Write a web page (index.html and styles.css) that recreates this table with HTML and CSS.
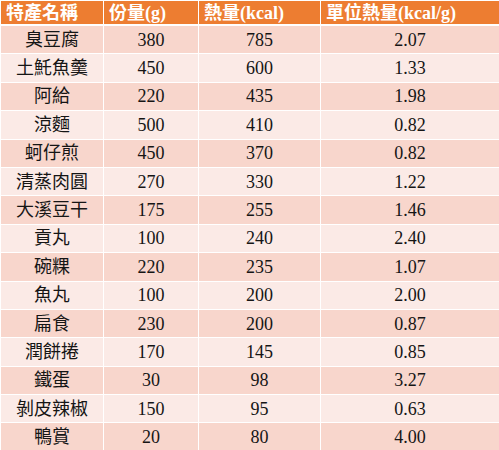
FILE: index.html
```html
<!DOCTYPE html>
<html>
<head>
<meta charset="utf-8">
<link rel="stylesheet" href="styles.css">
</head>
<body>
<table class="tbl">
  <colgroup>
    <col class="c1"><col class="c2"><col class="c3"><col class="c4">
  </colgroup>
  <thead>
    <tr><th>特產名稱</th><th>份量(g)</th><th>熱量(kcal)</th><th>單位熱量(kcal/g)</th></tr>
  </thead>
  <tbody>
    <tr><td>臭豆腐</td><td>380</td><td>785</td><td>2.07</td></tr>
    <tr><td>土魠魚羹</td><td>450</td><td>600</td><td>1.33</td></tr>
    <tr><td>阿給</td><td>220</td><td>435</td><td>1.98</td></tr>
    <tr><td>涼麵</td><td>500</td><td>410</td><td>0.82</td></tr>
    <tr><td>蚵仔煎</td><td>450</td><td>370</td><td>0.82</td></tr>
    <tr><td>清蒸肉圓</td><td>270</td><td>330</td><td>1.22</td></tr>
    <tr><td>大溪豆干</td><td>175</td><td>255</td><td>1.46</td></tr>
    <tr><td>貢丸</td><td>100</td><td>240</td><td>2.40</td></tr>
    <tr><td>碗粿</td><td>220</td><td>235</td><td>1.07</td></tr>
    <tr><td>魚丸</td><td>100</td><td>200</td><td>2.00</td></tr>
    <tr><td>扁食</td><td>230</td><td>200</td><td>0.87</td></tr>
    <tr><td>潤餅捲</td><td>170</td><td>145</td><td>0.85</td></tr>
    <tr><td>鐵蛋</td><td>30</td><td>98</td><td>3.27</td></tr>
    <tr><td>剝皮辣椒</td><td>150</td><td>95</td><td>0.63</td></tr>
    <tr><td>鴨賞</td><td>20</td><td>80</td><td>4.00</td></tr>
  </tbody>
</table>
</body>
</html>
```
FILE: styles.css
```css
html, body {
  margin: 0;
  padding: 0;
  background: #ffffff;
}
.tbl {
  width: 499px;
  border-collapse: collapse;
  table-layout: fixed;
  font-family: "Liberation Serif", "Noto Sans CJK TC", serif;
  font-size: 18px;
  color: #151515;
}
.c1 { width: 103px; }
.c2 { width: 95px; }
.c3 { width: 122px; }
.c4 { width: 179px; }
.tbl th, .tbl td {
  border: 1px solid #ffffff;
  padding: 0;
  line-height: 20px;
  white-space: nowrap;
  overflow: hidden;
}
.tbl th {
  height: 23px;
  background: #ed7d31;
  color: #ffffff;
  font-weight: bold;
  text-align: left;
  padding-left: 5px;
  border-bottom-width: 2px;
}
.tbl td {
  height: 27.4px;
  text-align: center;
}
.tbl tbody tr:nth-child(odd) td { background: #f8d6cc; }
.tbl tbody tr:nth-child(even) td { background: #fbeae6; }
```
